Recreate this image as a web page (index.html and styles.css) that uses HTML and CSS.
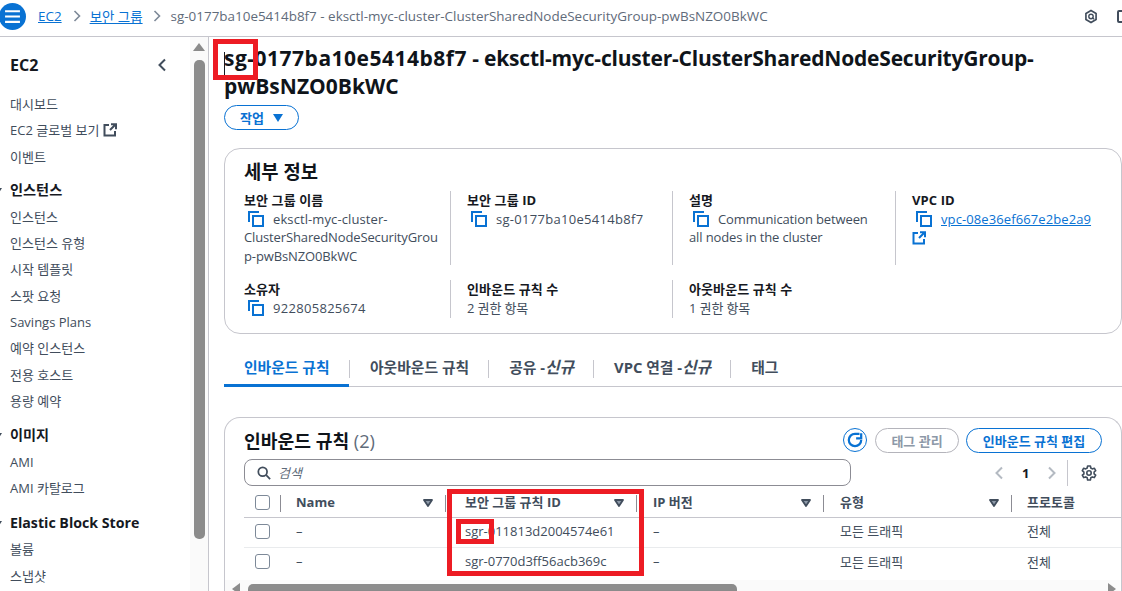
FILE: index.html
```html
<!DOCTYPE html>
<html lang="ko">
<head>
<meta charset="utf-8">
<title>보안 그룹</title>
<link rel="stylesheet" href="styles.css">
</head>
<body>
<div class="app">
  <header class="topbar">
    <span class="menu-btn">
      <svg viewBox="0 0 16 16" width="17" height="17"><path d="M1 3h14M1 8h14M1 13h14" stroke="#fff" stroke-width="2" fill="none"/></svg>
    </span>
    <nav class="crumbs">
      <a href="#">EC2</a>
      <svg class="chev first-chev" viewBox="0 0 8 12" width="8" height="12"><path d="M1.5 1l5 5-5 5" stroke="#7d8998" stroke-width="1.6" fill="none"/></svg>
      <a href="#">보안 그룹</a>
      <svg class="chev" viewBox="0 0 8 12" width="8" height="12"><path d="M1.5 1l5 5-5 5" stroke="#7d8998" stroke-width="1.6" fill="none"/></svg>
      <span>sg-0177ba10e5414b8f7 - eksctl-myc-cluster-ClusterSharedNodeSecurityGroup-pwBsNZO0BkWC</span>
    </nav>
    <div class="top-icons">
      <svg viewBox="0 0 16 16" width="14" height="15"><path d="M8 1.2l5.8 3.3v7L8 14.8l-5.8-3.3v-7z" fill="none" stroke="#414d5c" stroke-width="1.9"/><circle cx="8" cy="8" r="2.5" fill="none" stroke="#414d5c" stroke-width="1.6"/><path d="M9.5 9.5l2 1.5" stroke="#414d5c" stroke-width="1.6"/></svg>
      <span class="cut-icon"></span>
    </div>
  </header>
  <div class="body">
    <aside class="side">
      <div class="side-nav">
        <div class="side-head"><span>EC2</span>
          <svg viewBox="0 0 10 14" width="10" height="14"><path d="M8 1.5L2.5 7 8 12.5" stroke="#414d5c" stroke-width="2" fill="none"/></svg>
        </div>
        <ul class="group first">
          <li>대시보드</li>
          <li>EC2 글로벌 보기 <svg class="ext" viewBox="0 0 14 14" width="14" height="14"><path d="M6 2H1.5v10.5H12V8" stroke="#414d5c" stroke-width="2" fill="none"/><path d="M7 7l5.5-5.5M8 1.2h5v5" stroke="#414d5c" stroke-width="2" fill="none"/></svg></li>
          <li>이벤트</li>
        </ul>
        <h3 class="group-title">인스턴스</h3>
        <ul class="group">
          <li>인스턴스</li>
          <li>인스턴스 유형</li>
          <li>시작 템플릿</li>
          <li>스팟 요청</li>
          <li>Savings Plans</li>
          <li>예약 인스턴스</li>
          <li>전용 호스트</li>
          <li>용량 예약</li>
        </ul>
        <h3 class="group-title">이미지</h3>
        <ul class="group">
          <li>AMI</li>
          <li>AMI 카탈로그</li>
        </ul>
        <h3 class="group-title">Elastic Block Store</h3>
        <ul class="group">
          <li>볼륨</li>
          <li>스냅샷</li>
        </ul>
      </div>
      <div class="side-scroll">
        <span class="arrow-up"></span>
        <span class="thumb"></span>
      </div>
    </aside>
    <main class="main">
      <h1 class="title"><span class="caret"></span><span class="title-id">sg-0177ba10e5414b8f7</span><span class="title-rest"> - eksctl-myc-cluster-ClusterSharedNodeSecurityGroup-</span><br>pwBsNZO0BkWC</h1>
      <button class="btn action">작업 <span class="tri"></span></button>

      <section class="panel details">
        <h2 class="panel-title">세부 정보</h2>
        <div class="kv-grid">
          <div class="kv">
            <div class="k">보안 그룹 이름</div>
            <div class="v"><svg class="copy" viewBox="0 0 16 16" width="16" height="16"><path d="M1 11V1h10" stroke="#0972d3" stroke-width="2" fill="none"/><path d="M5 5h10v10H5z" stroke="#0972d3" stroke-width="2" fill="none"/></svg><span class="plain">eksctl-myc-cluster-</span><br>ClusterSharedNodeSecurityGrou<br>p-pwBsNZO0BkWC</div>
          </div>
          <div class="kv">
            <div class="k">보안 그룹 ID</div>
            <div class="v"><svg class="copy" viewBox="0 0 16 16" width="16" height="16"><path d="M1 11V1h10" stroke="#0972d3" stroke-width="2" fill="none"/><path d="M5 5h10v10H5z" stroke="#0972d3" stroke-width="2" fill="none"/></svg><span class="num">sg-0177ba10e5414b8f7</span></div>
          </div>
          <div class="kv">
            <div class="k">설명</div>
            <div class="v"><svg class="copy" viewBox="0 0 16 16" width="16" height="16"><path d="M1 11V1h10" stroke="#0972d3" stroke-width="2" fill="none"/><path d="M5 5h10v10H5z" stroke="#0972d3" stroke-width="2" fill="none"/></svg>Communication between<br>all nodes in the cluster</div>
          </div>
          <div class="kv">
            <div class="k">VPC ID</div>
            <div class="v"><svg class="copy" viewBox="0 0 16 16" width="16" height="16"><path d="M1 11V1h10" stroke="#0972d3" stroke-width="2" fill="none"/><path d="M5 5h10v10H5z" stroke="#0972d3" stroke-width="2" fill="none"/></svg><a class="plain" href="#">vpc-08e36ef667e2be2a9</a><br><svg class="ext-blue" viewBox="0 0 14 14" width="14" height="14"><path d="M6 2H1.5v10.5H12V8" stroke="#0972d3" stroke-width="2" fill="none"/><path d="M7 7l5.5-5.5M8 1.2h5v5" stroke="#0972d3" stroke-width="2" fill="none"/></svg></div>
          </div>
          <div class="kv">
            <div class="k">소유자</div>
            <div class="v"><svg class="copy" viewBox="0 0 16 16" width="16" height="16"><path d="M1 11V1h10" stroke="#0972d3" stroke-width="2" fill="none"/><path d="M5 5h10v10H5z" stroke="#0972d3" stroke-width="2" fill="none"/></svg><span class="num">922805825674</span></div>
          </div>
          <div class="kv">
            <div class="k">인바운드 규칙 수</div>
            <div class="v">2 권한 항목</div>
          </div>
          <div class="kv">
            <div class="k">아웃바운드 규칙 수</div>
            <div class="v">1 권한 항목</div>
          </div>
        </div>
      </section>

      <div class="tabs">
        <span class="tab active">인바운드 규칙</span>
        <span class="tab">아웃바운드 규칙</span>
        <span class="tab">공유 -<i>신규</i></span>
        <span class="tab">VPC 연결 -<i>신규</i></span>
        <span class="tab">태그</span>
      </div>

      <section class="panel rules">
        <div class="rules-head">
          <h2 class="rules-title">인바운드 규칙 <span class="count">(2)</span></h2>
          <div class="rules-actions">
            <span class="refresh"><svg viewBox="0 0 16 16" width="18" height="18"><path d="M13.5 8A5.5 5.5 0 1 1 8 2.5h4" stroke="#0972d3" stroke-width="2" fill="none"/><path d="M13.5 2v4.5H9" stroke="#0972d3" stroke-width="2" fill="none"/></svg></span>
            <button class="btn disabled">태그 관리</button>
            <button class="btn edit">인바운드 규칙 편집</button>
          </div>
        </div>
        <div class="filter-row">
          <div class="search">
            <svg viewBox="0 0 16 16" width="14" height="14"><circle cx="6.5" cy="6.5" r="5" stroke="#414d5c" stroke-width="2" fill="none"/><path d="M10.5 10.5L15 15" stroke="#414d5c" stroke-width="2"/></svg>
            <span>검색</span>
          </div>
          <div class="pager">
            <svg viewBox="0 0 10 14" width="10" height="14"><path d="M8 1.5L2.5 7 8 12.5" stroke="#b4bac2" stroke-width="2" fill="none"/></svg>
            <b>1</b>
            <svg viewBox="0 0 10 14" width="10" height="14"><path d="M2 1.5L7.5 7 2 12.5" stroke="#b4bac2" stroke-width="2" fill="none"/></svg>
            <span class="pager-sep"></span>
            <svg viewBox="0 0 16 16" width="16" height="16"><circle cx="8" cy="8" r="2.2" fill="none" stroke="#414d5c" stroke-width="1.6"/><path d="M6.6 1h2.8l.4 2 1.5.9 2-.7 1.4 2.4-1.6 1.4v1.9l1.6 1.3-1.4 2.4-2-.7-1.5.9-.4 2.2H6.6l-.4-2.2-1.5-.9-2 .7-1.4-2.4L2.9 9V7.1L1.3 5.6l1.4-2.4 2 .7 1.5-.9z" fill="none" stroke="#414d5c" stroke-width="1.6" stroke-linejoin="round"/></svg>
          </div>
        </div>
        <div class="table">
          <div class="tr th-row">
            <div class="c c0"><span class="check"></span><i class="sep"></i></div>
            <div class="c c1">Name<svg class="sort" viewBox="0 0 10 8" width="10" height="8"><path d="M1 1h8L5 7z" fill="#8d99a8" stroke="#414d5c" stroke-width="1.8" stroke-linejoin="round"/></svg><i class="sep"></i></div>
            <div class="c c2">보안 그룹 규칙 ID<svg class="sort" viewBox="0 0 10 8" width="10" height="8"><path d="M1 1h8L5 7z" fill="#8d99a8" stroke="#414d5c" stroke-width="1.8" stroke-linejoin="round"/></svg><i class="sep"></i></div>
            <div class="c c3">IP 버전<svg class="sort" viewBox="0 0 10 8" width="10" height="8"><path d="M1 1h8L5 7z" fill="#8d99a8" stroke="#414d5c" stroke-width="1.8" stroke-linejoin="round"/></svg><i class="sep"></i></div>
            <div class="c c4">유형<svg class="sort" viewBox="0 0 10 8" width="10" height="8"><path d="M1 1h8L5 7z" fill="#8d99a8" stroke="#414d5c" stroke-width="1.8" stroke-linejoin="round"/></svg><i class="sep"></i></div>
            <div class="c c5">프로토콜</div>
          </div>
          <div class="tr">
            <div class="c c0"><span class="check"></span></div>
            <div class="c c1">–</div>
            <div class="c c2">sgr-011813d2004574e61</div>
            <div class="c c3">–</div>
            <div class="c c4">모든 트래픽</div>
            <div class="c c5">전체</div>
          </div>
          <div class="tr last">
            <div class="c c0"><span class="check"></span></div>
            <div class="c c1">–</div>
            <div class="c c2">sgr-0770d3ff56acb369c</div>
            <div class="c c3">–</div>
            <div class="c c4">모든 트래픽</div>
            <div class="c c5">전체</div>
          </div>
        </div>
      </section>
    </main>
  </div>
  <div class="h-scroll"><span class="h-left"></span><span class="h-thumb"></span><span class="h-right"></span></div>
  <span class="mark mark-title"></span>
  <span class="mark mark-col"></span>
  <span class="mark mark-sgr"></span>
</div>
</body>
</html>
```
FILE: styles.css
```css
* { box-sizing: border-box; }
html, body { margin: 0; height: 100%; overflow: hidden; background: #fff; }
body {
  font-family: "Open Sans", "Noto Sans CJK KR", sans-serif;
  font-size: 13px;
  color: #16191f;
}
a { color: #0972d3; }
ul { list-style: none; margin: 0; padding: 0; }
h1, h2, h3 { margin: 0; }

.app { position: relative; width: 1122px; height: 591px; overflow: hidden; display: flex; flex-direction: column; }

.topbar { height: 37px; flex: none; display: flex; align-items: center; border-bottom: 1px solid #c6c6cd; padding-bottom: 4px; }
.menu-btn { width: 27px; height: 27px; margin-left: -1px; border-radius: 50%; background: #0972d3; display: flex; align-items: center; justify-content: center; flex: none; }
.crumbs { margin-left: 12px; display: flex; align-items: center; color: #5f6b7a; font-size: 13.45px; white-space: nowrap; }
.chev { margin: 0 10px; }
.first-chev { margin: 0 9px 0 11px; }
.top-icons { position: absolute; right: -8px; top: 9px; display: flex; gap: 19px; align-items: center; }
.cut-icon { width: 13px; height: 13px; border: 2px solid #414d5c; border-radius: 2px; }

.body { flex: 1; display: flex; min-height: 0; }
.side { width: 209px; flex: none; display: flex; border-right: 1px solid #c6c6cd; }
.side-nav { width: 190px; flex: none; padding: 0 0 0 10px; }
.side-head { display: flex; justify-content: space-between; align-items: center; height: 26px; margin-top: 15px; padding-right: 23px; font-size: 16px; font-weight: 700; color: #16191f; }
.group li { height: 26.3px; line-height: 26px; color: #414d5c; white-space: nowrap; display: flex; align-items: center; gap: 4px; }
.group { margin-bottom: 8.2px; }
.group.first { margin-top: 13px; margin-bottom: 7px; }
.group-title { position: relative; height: 26px; line-height: 26px; margin-bottom: 0.7px; font-size: 14.2px; font-weight: 700; color: #16191f; }
.group-title::before { content: ""; position: absolute; left: -14px; top: 11px; border: 3.5px solid transparent; border-top: 5px solid #414d5c; }
.side-scroll { width: 18px; flex: none; background: #fafafa; position: relative; display: flex; flex-direction: column; align-items: center; padding-top: 6px; }
.arrow-up { border: 6px solid transparent; border-bottom: 8px solid #8b8b8b; border-top: 0; margin-bottom: 9px; }
.thumb { width: 11px; height: 479px; background: #8b8b8b; border-radius: 5px; }

.main { flex: 1; min-width: 0; padding: 7px 0 0 15px; }
.title { position: relative; font-size: 21px; line-height: 28px; font-weight: 700; color: #0f141a; white-space: nowrap; }
.title-id { letter-spacing: 0.5px; }
.title-rest { letter-spacing: -0.2px; }
.caret { position: absolute; left: 0; top: 8px; width: 1px; height: 27px; background: #16191f; }
.btn { font: inherit; font-size: 13px; font-weight: 700; height: 25px; border-radius: 13px; background: #fff; border: 1.5px solid #0972d3; color: #0972d3; padding: 0; display: inline-flex; align-items: center; justify-content: center; }
.action { width: 75px; margin-top: 5px; gap: 9px; display: flex; }
.tri { border: 5px solid transparent; border-top: 8px solid #0972d3; border-bottom: 0; }

.panel { border: 1px solid #c6c6cd; border-radius: 16px; background: #fff; }
.details { margin-top: 18px; height: 186px; padding: 10px 20px 0 19px; }
.panel-title { font-size: 18.8px; line-height: 26px; font-weight: 700; color: #0f141a; }
.kv-grid { display: grid; grid-template-columns: 206px 222px 223px 1fr; row-gap: 15px; margin-top: 6px; }
.kv { border-left: 1px solid #c6c6cd; padding: 0 16px; font-size: 13px; }
.kv:nth-child(4n+1) { border-left: 0; padding-left: 0; }
.k { font-weight: 700; font-size: 13px; letter-spacing: 0.1px; line-height: 18px; color: #16191f; }
.v { color: #414d5c; line-height: 18.4px; margin-top: 1px; white-space: nowrap; letter-spacing: -0.13px; }
.num { letter-spacing: 0.3px; }
.plain { letter-spacing: 0.1px; }
.copy { vertical-align: -3px; margin: 0 9px 0 4px; }
.ext-blue { vertical-align: -3px; }

.tabs { display: flex; height: 53px; padding-top: 19px; border-bottom: 1px solid #c6c6cd; position: relative; }
.tab { padding: 0 19px 0 21px; height: 34px; line-height: 29px; font-size: 14.8px; font-weight: 700; color: #414d5c; position: relative; white-space: nowrap; }
.tab + .tab::before { content: ""; position: absolute; left: 0; top: 7px; height: 18px; width: 1px; background: #c6c6cd; }
.tab i { font-style: italic; font-size: 15.8px; }
.active { color: #0972d3; border-bottom: 3px solid #0972d3; width: 125px; padding-left: 20px; }

.rules { margin-top: 30px; height: 200px; padding: 7px 0 0 19px; border-bottom: 0; }
.rules-head { display: flex; justify-content: space-between; align-items: center; height: 30px; padding-right: 19px; }
.rules-title { font-size: 18.2px; font-weight: 700; color: #0f141a; }
.count { font-weight: 400; color: #5f6b7a; }
.rules-actions { display: flex; align-items: center; gap: 8px; }
.refresh { width: 24px; height: 24px; border-radius: 50%; border: 1.5px solid #0972d3; display: flex; align-items: center; justify-content: center; }
.disabled { width: 84px; border-color: #b4b4bb; color: #8d99a8; }
.edit { width: 136px; margin-left: -1px; }
.filter-row { display: flex; height: 27px; margin-top: 4px; align-items: center; }
.search { width: 607px; height: 27px; border: 1px solid #8c8c94; border-radius: 8px; display: flex; align-items: center; gap: 7px; padding-left: 12px; color: #5f6b7a; font-style: italic; font-size: 13px; }
.pager { display: flex; align-items: center; margin-left: 143px; gap: 18px; }
.pager b { font-size: 13px; }
.pager-sep { width: 1px; height: 26px; background: #c6c6cd; margin: 0 -5px 0 -8px; }

.table { margin-top: 4px; font-size: 13px; color: #414d5c; }
.tr { display: flex; height: 30px; border-bottom: 1px solid #e9ebed; align-items: center; }
.tr.last { border-bottom: 0; }
.th-row { height: 28px; border-bottom: 1px solid #c6c6cd; font-weight: 700; }
.c { position: relative; height: 100%; padding-bottom: 4px; display: flex; align-items: center; flex: none; white-space: nowrap; }
.c0 { width: 37px; padding-left: 11px; padding-bottom: 3px; }
.c1 { width: 165px; padding-left: 15px; }
.c2 { width: 191px; padding-left: 19px; }
.c3 { width: 187px; padding-left: 16px; }
.c4 { width: 188px; padding-left: 16px; }
.c5 { padding-left: 15px; }
.check { width: 15px; height: 15px; border: 1.5px solid #7d8998; border-radius: 3px; background: #fff; }
.sep { position: absolute; right: 0; top: 5px; height: 17px; width: 1px; background: #8c8c94; }
.sort { position: absolute; right: 13px; top: 9px; }

.h-scroll { position: absolute; left: 225px; right: 2px; bottom: 0; height: 11px; background: #fafafa; }
.h-left { position: absolute; left: 7px; top: 3px; border: 6px solid transparent; border-right: 8px solid #8b8b8b; border-left: 0; }
.h-thumb { position: absolute; left: 23px; top: 4px; width: 489px; height: 12px; background: #8b8b8b; border-radius: 5px; }
.h-right { position: absolute; right: 4px; top: 3px; border: 6px solid transparent; border-left: 8px solid #8b8b8b; border-right: 0; }

.mark { position: absolute; border: 5px solid #ed1c24; }
.mark-title { left: 213px; top: 39px; width: 45px; height: 41px; }
.mark-col { left: 447px; top: 489px; width: 197px; height: 87px; }
.mark-sgr { left: 456px; top: 519px; width: 38px; height: 25px; }
```
